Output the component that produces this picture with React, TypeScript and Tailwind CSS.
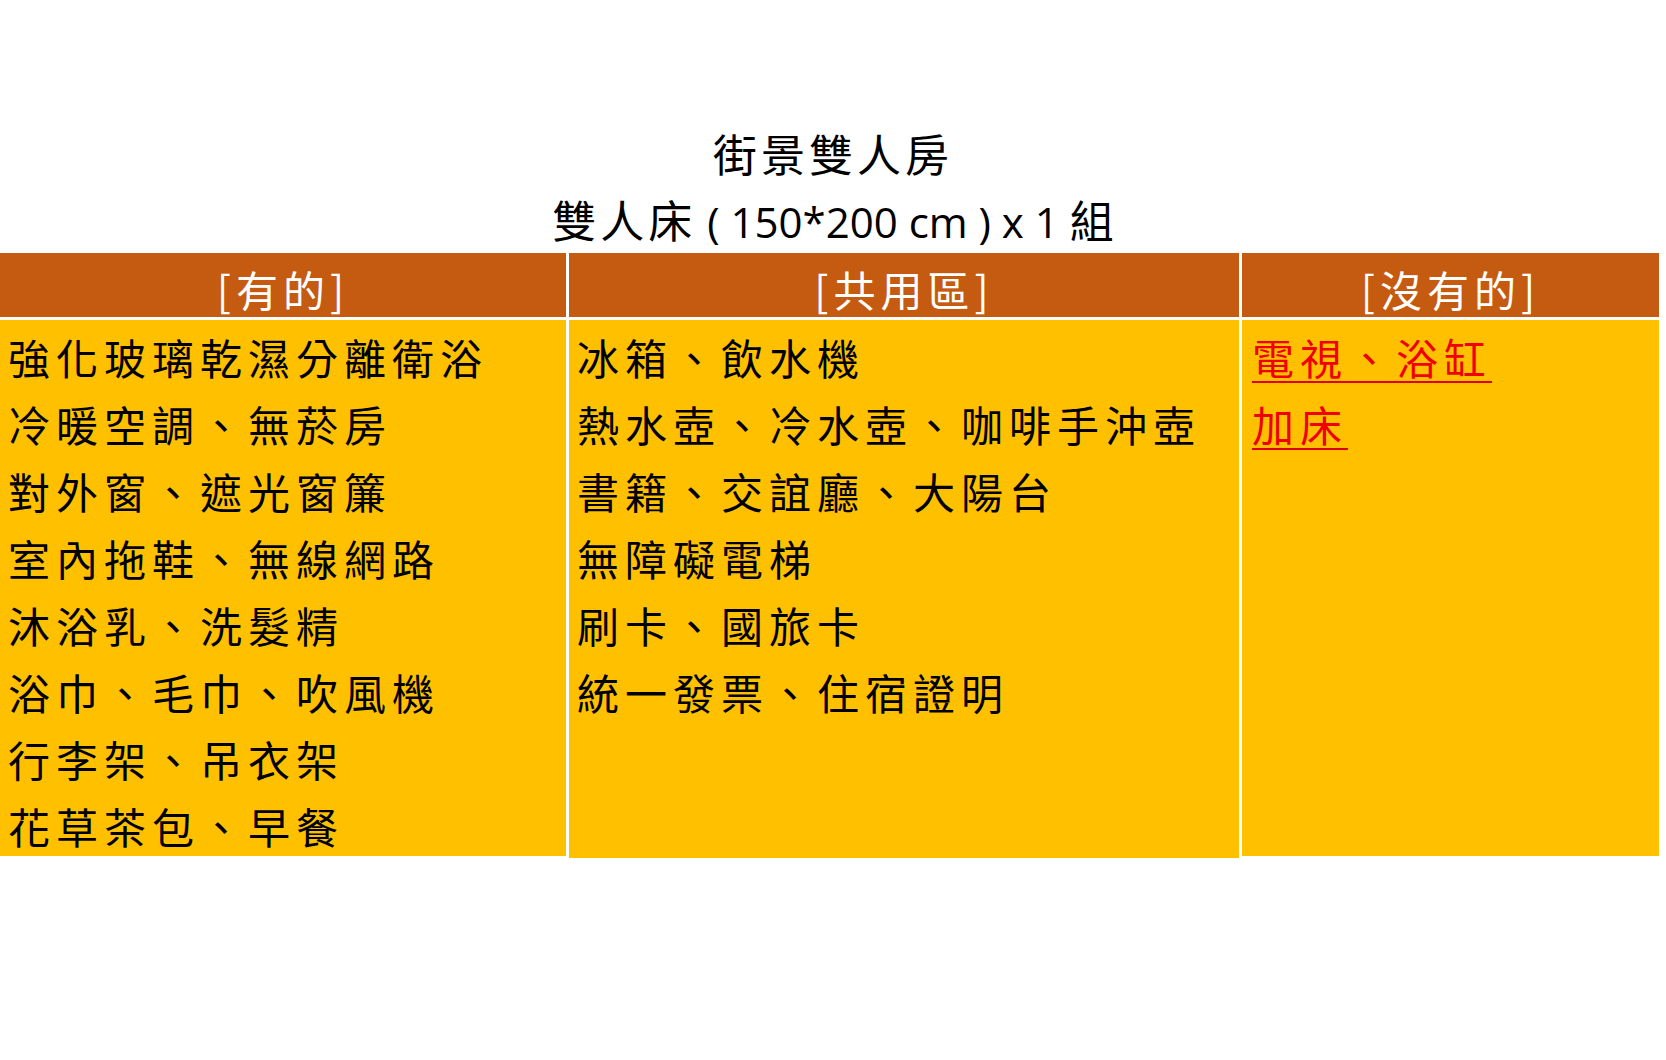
const haveItems = [
  "強化玻璃乾濕分離衛浴",
  "冷暖空調、無菸房",
  "對外窗、遮光窗簾",
  "室內拖鞋、無線網路",
  "沐浴乳、洗髮精",
  "浴巾、毛巾、吹風機",
  "行李架、吊衣架",
  "花草茶包、早餐",
];

const sharedItems = [
  "冰箱、飲水機",
  "熱水壺、冷水壺、咖啡手沖壺",
  "書籍、交誼廳、大陽台",
  "無障礙電梯",
  "刷卡、國旅卡",
  "統一發票、住宿證明",
];

const missingItems = ["電視、浴缸", "加床"];

const cjk = "font-['Noto_Sans_CJK_TC','Noto_Sans_CJK_JP',sans-serif]";

const App = () => {
  return (
    <div className={`w-[1666px] h-[1060px] bg-white text-black ${cjk}`}>
      <div className="pt-[119px] text-center">
        <div className="text-[44px] leading-[69px] tracking-[4px]">街景雙人房</div>
        <div className="text-[44px] leading-[62px]">
          <span className="tracking-[4px]">雙人床</span>
          <span className="font-['Open_Sans','Noto_Sans_CJK_TC',sans-serif] text-[42px]"> ( 150*200 cm ) x 1 </span>
          <span>組</span>
        </div>
      </div>

      <div className="mt-[0px] w-[1659px] grid grid-cols-[566px_670px_417px] gap-x-[3px] gap-y-[3px]">
        <div className="h-[64px] bg-[#c55a11] text-white text-[42px] leading-[64px] tracking-[5px] text-center pt-[4px]">[有的]</div>
        <div className="h-[64px] bg-[#c55a11] text-white text-[42px] leading-[64px] tracking-[5px] text-center pt-[4px]">[共用區]</div>
        <div className="h-[64px] bg-[#c55a11] text-white text-[42px] leading-[64px] tracking-[5px] text-center pt-[4px]">[沒有的]</div>

        <div className="h-[536px] bg-[#ffc000] pl-[8px] pt-[3px] text-[42px] leading-[67px] tracking-[6px]">
          {haveItems.map((t) => (
            <div key={t} className="whitespace-nowrap">{t}</div>
          ))}
        </div>
        <div className="h-[538px] bg-[#ffc000] pl-[8px] pt-[3px] text-[42px] leading-[67px] tracking-[6px]">
          {sharedItems.map((t) => (
            <div key={t} className="whitespace-nowrap">{t}</div>
          ))}
        </div>
        <div className="h-[536px] bg-[#ffc000] pl-[10px] pt-[3px] text-[42px] leading-[67px] tracking-[6px] text-[#f00000]">
          {missingItems.map((t) => (
            <div key={t} className="whitespace-nowrap">
              <span className="underline decoration-2 underline-offset-[6px] decoration-[#e00000]">{t}</span>
            </div>
          ))}
        </div>
      </div>
    </div>
  );
};

export default App;
